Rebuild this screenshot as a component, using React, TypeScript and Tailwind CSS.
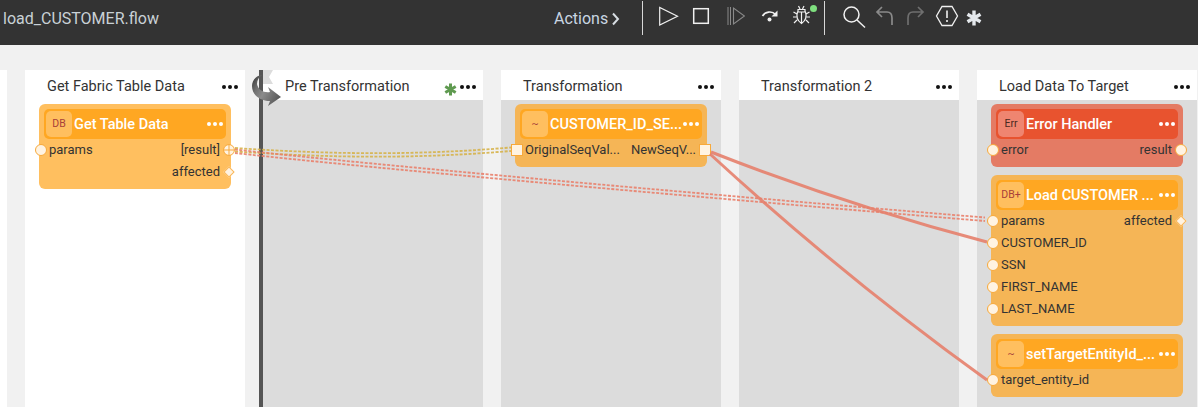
import React from "react";

const font = { fontFamily: "Roboto, sans-serif" };

function Dots({ white }: { white?: boolean }) {
  const c = white ? "bg-white" : "bg-[#111]";
  return (
    <div className="flex gap-[2px] shrink-0">
      <span className={`w-[4px] h-[4px] rounded-full ${c}`} />
      <span className={`w-[4px] h-[4px] rounded-full ${c}`} />
      <span className={`w-[4px] h-[4px] rounded-full ${c}`} />
    </div>
  );
}

type PortKind = "circle" | "cross" | "diamond" | "square" | "none";

function Port({ kind, side }: { kind: PortKind; side: "left" | "right" }) {
  const pos = side === "left" ? "left-[-4px]" : "right-[-4px]";
  if (kind === "none") return null;
  if (kind === "square")
    return <span className={`absolute top-[5px] ${pos} w-[12px] h-[12px] bg-[#fff3e2] border border-[#f7a93b]`} />;
  if (kind === "diamond")
    return (
      <span className={`absolute top-[5px] ${pos} w-[12px] h-[12px] flex items-center justify-center`}>
        <span className="w-[8px] h-[8px] rotate-45 bg-[#fff3e2] border border-[#f9b75a]" />
      </span>
    );
  if (kind === "cross")
    return (
      <span className={`absolute top-[5px] ${pos} w-[12px] h-[12px]`}>
        <svg width="12" height="12" viewBox="0 0 12 12">
          <circle cx="6" cy="6" r="5.4" fill="#fff3e2" stroke="#f7a93b" />
          <path d="M0.5 6H11.5M6 0.5V11.5" stroke="#f7a93b" strokeWidth="1" />
        </svg>
      </span>
    );
  return <span className={`absolute top-[5px] ${pos} w-[12px] h-[12px] rounded-full bg-[#fff3e2] border border-[#f7a93b]`} />;
}

type Row = { l?: string; r?: string; lk?: PortKind; rk?: PortKind };

function Card({
  icon,
  title,
  rows,
  card,
  head,
  iconBg,
  iconText = "text-[#a8423a]",
}: {
  icon: string;
  title: string;
  rows: Row[];
  card: string;
  head: string;
  iconBg: string;
  iconText?: string;
}) {
  return (
    <div className={`rounded-[6px] px-[5px] pt-[5px] pb-[6px] ${card}`}>
      <div className={`flex items-center h-[30px] rounded-[5px] pl-[2px] pr-[3px] ${head}`}>
        <div className={`w-[26px] h-[26px] rounded-[5px] flex items-center justify-center shrink-0 text-[10.5px] ${iconBg} ${iconText}`}>{icon}</div>
        <div className="ml-[2px] mt-[2px] flex-1 min-w-0 text-white text-[14.5px] font-medium whitespace-nowrap">{title}</div>
        <Dots white />
      </div>
      {rows.map((r, i) => (
        <div key={i} className="relative flex justify-between items-center h-[22px] mx-[-5px] pl-[10px] pr-[11px] text-[13px] text-[#333] whitespace-nowrap">
          <span>{r.l}</span>
          <span>{r.r}</span>
          <Port kind={r.lk ?? "none"} side="left" />
          <Port kind={r.rk ?? "none"} side="right" />
        </div>
      ))}
    </div>
  );
}

function Column({ title, gray, star, children }: { title: string; gray?: boolean; star?: boolean; children?: React.ReactNode }) {
  return (
    <div className="w-[220px] shrink-0 flex flex-col">
      <div className="h-[30px] bg-white flex items-center pt-[4px] pl-[22px] pr-[7px] text-[14.5px] text-[#333] justify-between">
        <span>{title}</span>
        <div className="flex items-center">
          {star && (
            <svg width="13" height="13" viewBox="0 0 13 13" className="mr-[3px] mt-[4px]">
              <path d="M6.5 0.5V12.5M1.3 3.5L11.7 9.5M11.7 3.5L1.3 9.5" stroke="#5f9a50" strokeWidth="3" />
            </svg>
          )}
          <Dots />
        </div>
      </div>
      <div className={`flex-1 px-[14px] pt-[4px] flex flex-col gap-[8px] ${gray ? "bg-[#dcdcdc]" : "bg-white"}`}>{children}</div>
    </div>
  );
}

function Toolbar() {
  const w = "#f0f0f0";
  const d = "#8a8a8a";
  return (
    <div className="h-[45px] bg-[#333333] flex items-start shrink-0">
      <div className="ml-[3px] mt-[9px] w-[551px] text-[16px] leading-[20px] text-[#c9d1d6]">load_CUSTOMER.flow</div>
      <div className="mt-[9px] w-[53px] text-[16px] leading-[20px] text-[#c9d6e2]">Actions</div>
      <svg width="10" height="14" viewBox="0 0 10 14" className="mt-[12px] ml-[4px]">
        <path d="M2 1.5L7 7L2 12.5" fill="none" stroke="#d7dde2" strokeWidth="2" />
      </svg>
      <div className="w-px h-[34px] bg-[#d8d8d8] mt-px ml-[21px]" />
      <svg width="20" height="20" viewBox="0 0 20 20" className="ml-[16px] mt-[6px]">
        <path d="M0.7 1.5V19L18.5 10.2Z" fill="none" stroke={w} strokeWidth="1.2" />
      </svg>
      <svg width="18" height="18" viewBox="0 0 18 18" className="ml-[13px] mt-[7px]">
        <rect x="1.7" y="1.7" width="14.6" height="14.6" fill="none" stroke={w} strokeWidth="1.5" />
      </svg>
      <svg width="18" height="20" viewBox="0 0 18 20" className="ml-[17px] mt-[6px]">
        <path d="M1 1V19M3.5 1V19" stroke={d} strokeWidth="1" />
        <path d="M6.5 2V18L17.5 10Z" fill="none" stroke={d} strokeWidth="1.1" />
      </svg>
      <svg width="18" height="14" viewBox="0 0 18 14" className="ml-[16px] mt-[9px]">
        <path d="M1.5 7C4 2.5 11 1.5 14.5 5.5" fill="none" stroke={w} strokeWidth="1.7" />
        <path d="M16.5 1.5V7.5H10.5Z" fill={w} />
        <circle cx="8.5" cy="10.5" r="2" fill={w} />
      </svg>
      <div className="relative ml-[13px] mt-[5px] w-[25px] h-[20px]">
        <svg width="20" height="20" viewBox="0 0 20 20">
          <path d="M6.5 1L8 4M12 1L10.5 4M6 4.5H13V7H6ZM5.5 7H13.5C14.5 10 14.5 15 9.5 18.5C4.5 15 4.5 10 5.5 7ZM9.5 7V18M5 9L1.5 7M14 9L17.5 7M4.5 12H1M14.5 12H18M5 15L2 18M14 15L17 18" fill="none" stroke={w} strokeWidth="1.2" />
        </svg>
        <span className="absolute top-0 left-[18px] w-[7px] h-[7px] rounded-full bg-[#7fe07f]" />
      </div>
      <div className="w-px h-[34px] bg-[#d8d8d8] mt-px ml-[7px]" />
      <svg width="24" height="24" viewBox="0 0 24 24" className="ml-[17px] mt-[5px]">
        <circle cx="9.5" cy="9.5" r="7.5" fill="none" stroke={w} strokeWidth="1.5" />
        <path d="M15 15L23 22.5" stroke={w} strokeWidth="1.5" />
      </svg>
      <svg width="20" height="22" viewBox="0 0 20 22" className="ml-[9px] mt-[5px]">
        <path d="M7 2L2 7L7 12M2 7H12C16 7 17 10 17 13V20" fill="none" stroke={d} strokeWidth="1.7" />
      </svg>
      <svg width="20" height="22" viewBox="0 0 20 22" className="ml-[10px] mt-[5px]">
        <path d="M13 2L18 7L13 12M18 7H8C4 7 3 10 3 13V20" fill="none" stroke="#6f6f6f" strokeWidth="1.7" />
      </svg>
      <svg width="24" height="22" viewBox="0 0 24 22" className="ml-[10px] mt-[5px]">
        <path d="M7 1.5H17L22.5 11L17 20.5H7L1.5 11Z" fill="none" stroke={w} strokeWidth="1.3" />
        <path d="M12 5.5V13M12 15V17" stroke={w} strokeWidth="1.6" />
      </svg>
      <svg width="16" height="16" viewBox="0 0 16 16" className="ml-[7px] mt-[10px]">
        <path d="M8 0.5V15.5M1.5 4.2L14.5 11.8M14.5 4.2L1.5 11.8" stroke="#e4e8ec" strokeWidth="3.4" />
      </svg>
    </div>
  );
}

function Wires() {
  const gold = "#d6b34a";
  const red = "#e9806a";
  const dash = { strokeDasharray: "3 1.5", fill: "none", strokeWidth: 1.8, opacity: 0.9 };
  return (
    <svg className="absolute left-0 top-0 pointer-events-none" width="1198" height="407" viewBox="0 0 1198 407">
      <path d="M235 148C340 155 420 155 511 147.5" stroke={gold} {...dash} />
      <path d="M235 151.5C340 158.5 420 158.5 511 151" stroke={gold} {...dash} />
      <path d="M235 149.5C400 168 820 204 985 217.5" stroke={red} {...dash} />
      <path d="M235 153C400 171.5 820 207.5 985 221" stroke={red} {...dash} />
      <path d="M711 152Q846 205 987 242" fill="none" stroke="#e5806c" strokeWidth="3" opacity="0.9" />
      <path d="M710 154Q845 278 987 380" fill="none" stroke="#e5806c" strokeWidth="3" opacity="0.9" />
    </svg>
  );
}

function PhaseMarker() {
  return (
    <svg className="absolute left-[252px] top-[70px]" width="30" height="37" viewBox="0 0 30 37">
      <defs>
        <linearGradient id="arrowG" x1="0" y1="0" x2="1" y2="0.6">
          <stop offset="0" stopColor="#2f2f2f" />
          <stop offset="0.3" stopColor="#707070" />
          <stop offset="0.55" stopColor="#8c8c8c" />
          <stop offset="1" stopColor="#5c5c5c" />
        </linearGradient>
      </defs>
      <path d="M11 0H21L17 7L21 14H11Z" fill="#dcdcdc" />
      <path d="M10 5C3 6 0 11 0 16C0 25 8 31 18 31L16 36L29 27L16 17L18 22C12 23 6 20 5 14C5 10 7 7 10 5Z" fill="url(#arrowG)" />
    </svg>
  );
}

export default function App() {
  const orange = { head: "bg-[#ffa722]", iconBg: "bg-[#ffbf5f]" };
  const amber = { card: "bg-[#f5b556]", ...orange };
  return (
    <div className="relative w-[1198px] h-[407px] overflow-hidden bg-[#f1f1f1] flex flex-col" style={font}>
      <Toolbar />
      <div className="flex-1 flex pt-[25px]">
        <div className="w-[7px] shrink-0 bg-white mr-[18px]" />
        <Column title="Get Fabric Table Data">
          <Card
            icon="DB"
            title="Get Table Data"
            card="bg-[#ffbf5f]"
            {...orange}
            rows={[
              { l: "params", r: "[result]", lk: "circle", rk: "cross" },
              { r: "affected", rk: "diamond" },
            ]}
          />
        </Column>
        <div className="w-[4px] bg-[#555] ml-[14px] shrink-0" />
        <div className="mr-[18px] flex">
          <Column title="Pre Transformation" gray star />
        </div>
        <div className="mr-[18px] flex">
          <Column title="Transformation" gray>
            <Card
              icon="~"
              title="CUSTOMER_ID_SE..."
              {...amber}
              rows={[{ l: "OriginalSeqVal...", r: "NewSeqV...", lk: "square", rk: "square" }]}
            />
          </Column>
        </div>
        <div className="mr-[18px] flex">
          <Column title="Transformation 2" gray />
        </div>
        <Column title="Load Data To Target" gray>
          <Card
            icon="Err"
            title="Error Handler"
            card="bg-[#e47b64]"
            head="bg-[#e8532f]"
            iconBg="bg-[#ef8570]"
            iconText="text-[#4a2a22]"
            rows={[{ l: "error", r: "result", lk: "circle", rk: "circle" }]}
          />
          <Card
            icon="DB+"
            title="Load CUSTOMER ..."
            {...amber}
            rows={[
              { l: "params", r: "affected", lk: "circle", rk: "diamond" },
              { l: "CUSTOMER_ID", lk: "circle" },
              { l: "SSN", lk: "circle" },
              { l: "FIRST_NAME", lk: "circle" },
              { l: "LAST_NAME", lk: "circle" },
            ]}
          />
          <Card
            icon="~"
            title="setTargetEntityId_..."
            {...amber}
            rows={[{ l: "target_entity_id", lk: "circle" }]}
          />
        </Column>
      </div>
      <Wires />
      <PhaseMarker />
    </div>
  );
}
